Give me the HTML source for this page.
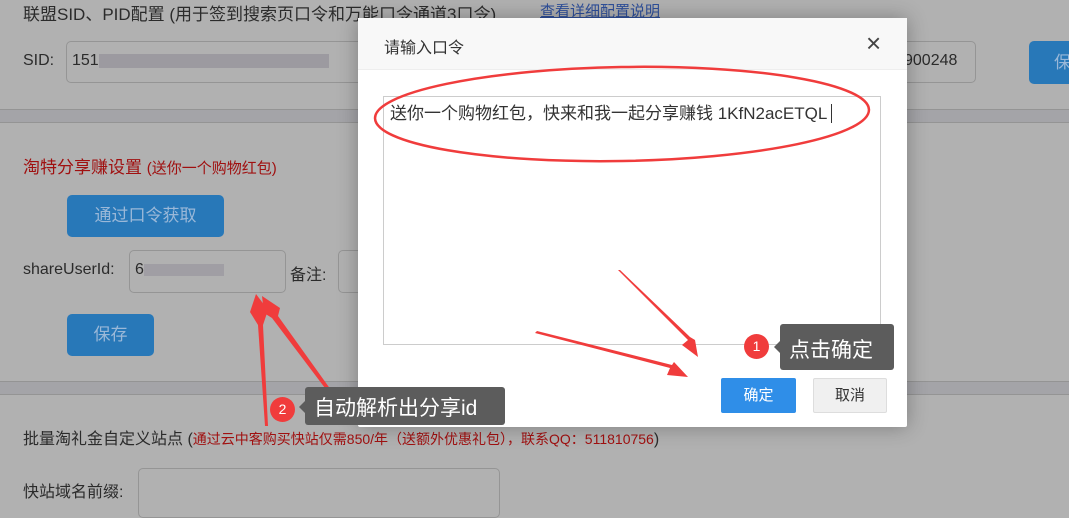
<!DOCTYPE html>
<html style="background:#b1b1b1"><head><meta charset="utf-8"><style>
*{box-sizing:border-box;margin:0;padding:0}
html,body{background:#b1b1b1}
body{width:1069px;height:504px;overflow:hidden;position:relative;font-family:"Liberation Sans","Noto Sans CJK SC",sans-serif;color:#2b2b2b;font-size:16px}
.a{position:absolute;white-space:nowrap}
.inp{position:absolute;border:1px solid #959595;border-radius:5px}
.btn{position:absolute;background:#2878b8;color:#9ab8d8;border-radius:5px;text-align:center;font-size:17px}
.sep{position:absolute;left:0;width:1069px;height:14px;background:#a4a4a8;border-top:1px solid #949494;border-bottom:1px solid #949494}
.red{color:#a01010}
</style></head><body>
<div class="a" style="left:23px;top:0;font-size:17px">联盟SID、PID配置 (用于签到搜索页口令和万能口令通道3口令)</div>
<div class="a" style="left:540px;top:0;font-size:15px;color:#2e4f9a;text-decoration:underline">查看详细配置说明</div>
<div class="a" style="left:23px;top:52px;font-size:16px">SID:</div>
<div class="inp" style="left:66px;top:41px;width:910px;height:42px"></div>
<div class="a" style="left:72px;top:52px;font-size:16px">151<span style="display:inline-block;width:230px;height:14px;background:#9c9aa0;vertical-align:middle"></span></div>
<div class="a" style="left:904px;top:52px;font-size:16px">900248</div>
<div class="btn" style="left:1029px;top:41px;width:60px;height:43px;line-height:43px;text-align:left;padding-left:25px">保</div>
<div class="sep" style="top:109px"></div>
<div class="a red" style="left:23px;top:153px;font-size:17px">淘特分享赚设置 <span style="font-size:15px">(送你一个购物红包)</span></div>
<div class="btn" style="left:67px;top:195px;width:157px;height:42px;line-height:42px">通过口令获取</div>
<div class="a" style="left:23px;top:261px">shareUserId:</div>
<div class="inp" style="left:129px;top:250px;width:157px;height:43px"></div>
<div class="a" style="left:135px;top:261px">6<span style="display:inline-block;width:80px;height:12px;background:#a09ea4;vertical-align:middle"></span></div>
<div class="a" style="left:290px;top:261px">备注:</div>
<div class="inp" style="left:338px;top:250px;width:40px;height:43px"></div>
<div class="btn" style="left:67px;top:314px;width:87px;height:42px;line-height:42px">保存</div>
<div class="sep" style="top:381px"></div>
<div class="a" style="left:23px;top:425px;font-size:16px">批量淘礼金自定义站点 (<span class="red" style="font-size:14px">通过云中客购买快站仅需850/年（送额外优惠礼包），联系QQ：511810756</span>)</div>
<div class="a" style="left:23px;top:478px">快站域名前缀:</div>
<div class="inp" style="left:138px;top:468px;width:362px;height:50px"></div>

<div style="position:absolute;left:358px;top:18px;width:549px;height:409px;background:#fff;border-radius:2px;box-shadow:0 0 20px rgba(0,0,0,.3)">
<div style="height:52px;background:#f8f8f8;border-bottom:1px solid #eee"></div>
<div class="a" style="left:26px;top:16px;font-size:16px;color:#333">请输入口令</div>
<div class="a" style="left:508px;top:10px;font-size:26px;color:#444;font-weight:300">×</div>
<div style="position:absolute;left:25px;top:78px;width:498px;height:249px;border:1px solid #ccc"></div>
<div class="a" style="left:32px;top:81px;font-size:17px;color:#333">送你一个购物红包，快来和我一起分享赚钱 1KfN2acETQL<span style="border-left:1px solid #333;margin-left:4px"></span></div>
<div style="position:absolute;left:363px;top:360px;width:75px;height:35px;background:#2f8ee8;color:#fff;border-radius:2px;text-align:center;line-height:35px;font-size:15px">确定</div>
<div style="position:absolute;left:455px;top:360px;width:74px;height:35px;background:#f0f0f0;border:1px solid #ddd;color:#333;border-radius:2px;text-align:center;line-height:33px;font-size:15px">取消</div>
</div>

<svg style="position:absolute;left:0;top:0" width="1069" height="504">
<ellipse cx="622" cy="114" rx="247" ry="47" fill="none" stroke="#f03c3c" stroke-width="2.5" transform="rotate(-1 622 114)"/>
<polygon points="265,426 258,325 250,312 256,294 268,310 263,325 268,426" fill="#f03c3c"/>
<polygon points="328,392 272,318 264,313 262,296 280,308 278,316 331,390" fill="#f03c3c"/>
<polygon points="618,270 688,340 682,345 698,357 695,340 690,337 620,270" fill="#f03c3c"/>
<polygon points="535,333 670,368 667,375 688,377 674,362 672,365 537,331" fill="#f03c3c"/>
</svg>

<div style="position:absolute;left:305px;top:387px;width:200px;height:38px;background:#5c5c5c;border-radius:3px"></div>
<div style="position:absolute;left:299px;top:401px;border:6px solid transparent;border-right-color:#5c5c5c;border-left:0"></div>
<div class="a" style="left:314px;top:392px;font-size:21px;color:#fff">自动解析出分享id</div>
<div style="position:absolute;left:270px;top:397px;width:25px;height:25px;border-radius:50%;background:#f03c3c;color:#fff;text-align:center;line-height:25px;font-size:14px">2</div>

<div style="position:absolute;left:780px;top:324px;width:114px;height:46px;background:#5c5c5c;border-radius:3px"></div>
<div style="position:absolute;left:774px;top:341px;border:6px solid transparent;border-right-color:#5c5c5c;border-left:0"></div>
<div class="a" style="left:789px;top:334px;font-size:21px;color:#fff">点击确定</div>
<div style="position:absolute;left:744px;top:334px;width:25px;height:25px;border-radius:50%;background:#f03c3c;color:#fff;text-align:center;line-height:25px;font-size:14px">1</div>
</body></html>
